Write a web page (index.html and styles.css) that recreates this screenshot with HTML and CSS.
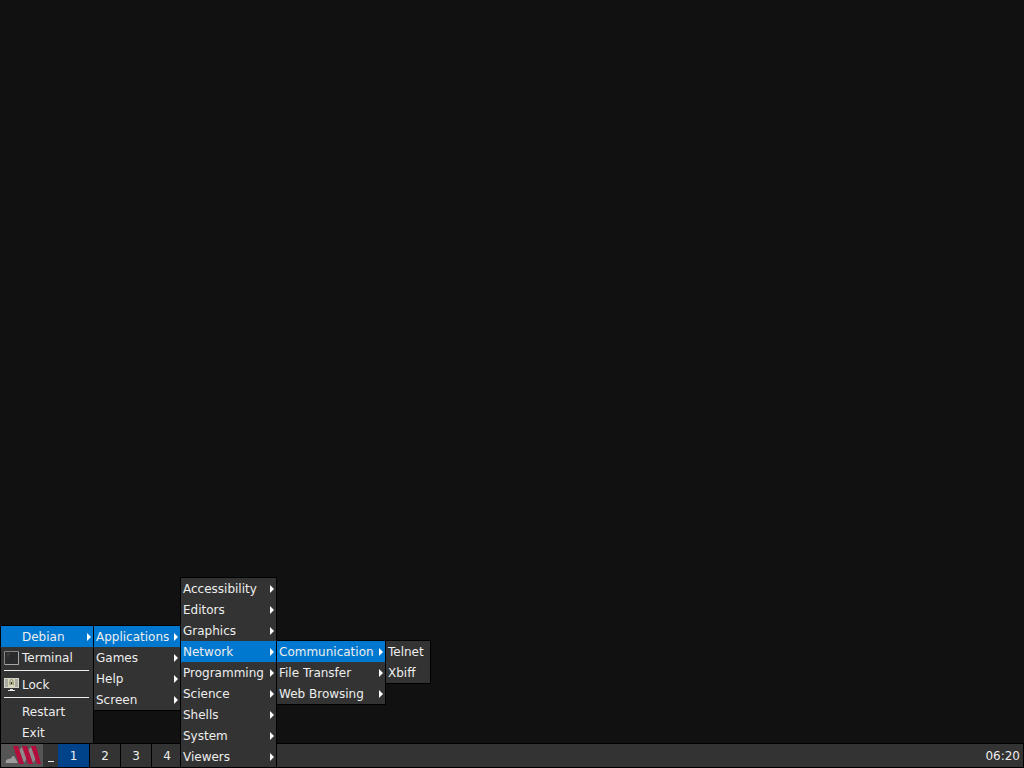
FILE: index.html
```
<!DOCTYPE html>
<html lang="en">
<head>
<meta charset="utf-8">
<title>Desktop</title>
<link rel="stylesheet" href="styles.css">
</head>
<body>
<main class="desktop"></main>
<footer class="taskbar">
  <button class="start" aria-label="Menu">
    <svg class="logo" viewBox="0 0 42 23" aria-hidden="true">
      <path d="M5 19c-1-3 1-4 3-4 3 0 2-3 5-3l4 7z" fill="#9d9a9a"/>
      <path d="M18 6l3-3 5 11-3 5zM27 6l3-3 5 11-3 5z" fill="#8f898c"/>
      <path d="M12 2h5l6 18h-5zM21 2h5l6 18h-5zM30 2h5l5 18h-4z" fill="#b40c3b"/>
    </svg>
  </button>
  <button class="show-desktop" aria-label="Show desktop"><span class="dash"></span></button>
  <nav class="workspaces" aria-label="Workspaces">
    <button class="workspace current">1</button>
    <button class="workspace">2</button>
    <button class="workspace">3</button>
    <button class="workspace">4</button>
  </nav>
  <time class="clock">06:20</time>

  <ul class="menu root">
    <li class="open"><button class="item parent">Debian</button>
      <ul class="menu sections">
        <li class="open"><button class="item parent">Applications</button>
          <ul class="menu categories">
            <li><button class="item parent">Accessibility</button></li>
            <li><button class="item parent">Editors</button></li>
            <li><button class="item parent">Graphics</button></li>
            <li class="open"><button class="item parent">Network</button>
              <ul class="menu network">
                <li class="open"><button class="item parent">Communication</button>
                  <ul class="menu programs">
                    <li><button class="item">Telnet</button></li>
                    <li><button class="item">Xbiff</button></li>
                  </ul>
                </li>
                <li><button class="item parent">File Transfer</button></li>
                <li><button class="item parent">Web Browsing</button></li>
              </ul>
            </li>
            <li><button class="item parent">Programming</button></li>
            <li><button class="item parent">Science</button></li>
            <li><button class="item parent">Shells</button></li>
            <li><button class="item parent">System</button></li>
            <li><button class="item parent">Viewers</button></li>
          </ul>
        </li>
        <li><button class="item parent">Games</button></li>
        <li><button class="item parent">Help</button></li>
        <li><button class="item parent">Screen</button></li>
      </ul>
    </li>
    <li><button class="item">
      <svg class="icon" viewBox="0 0 16 16" aria-hidden="true">
        <path d="M.5 1.500h14v13H.5z" fill="#292b2d" stroke="#858585"/>
        <path d="M3 4h3M3 6h2" stroke="#4b4d4f"/>
        <path d="M1 14.500h13.500V2" fill="none" stroke="#a5a5a5"/>
      </svg>Terminal</button></li>
    <li class="separator" role="separator"></li>
    <li><button class="item">
      <svg class="icon" viewBox="0 0 16 16" aria-hidden="true">
        <path d="M0 1h15v10H0z" fill="#d4d4ca"/>
        <path d="M1 2h13v8H1z" fill="#aaaaa0"/>
        <path d="M4 2h7v8H4z" fill="#d8d6bb"/>
        <path d="M6 5V4a1.500 1.500 0 0 1 3 0v1" fill="none" stroke="#8d8a6a"/>
        <path d="M5 5h5v3H5z" fill="#a5a27f"/>
        <path d="M7 5h1v2H7z" fill="#333"/>
        <path d="M6 12h3v1h2v1H4v-1h2z" fill="#e8e8e4"/>
      </svg>Lock</button></li>
    <li class="separator" role="separator"></li>
    <li><button class="item">Restart</button></li>
    <li><button class="item">Exit</button></li>
  </ul>
</footer>
</body>
</html>
```
FILE: styles.css
```
* { box-sizing: border-box; }

body {
  margin: 0;
  height: 100vh;
  display: flex;
  flex-direction: column;
  background: #111;
  color: #eee;
  font: 12px/21px "DejaVu Sans", sans-serif;
}

button {
  margin: 0;
  padding: 0;
  border: 0;
  background: none;
  color: inherit;
  font: inherit;
}

.desktop { flex: 1; }

.taskbar {
  position: relative;
  display: flex;
  height: 25px;
  border: 1px solid #000;
  background: #333;
}

.start {
  width: 42px;
  background: #555;
}

.logo {
  display: block;
  width: 42px;
  height: 23px;
}

.show-desktop {
  display: flex;
  align-items: flex-end;
  justify-content: center;
  width: 15px;
  padding-bottom: 5px;
}

.dash {
  width: 6px;
  height: 1px;
  background: #eee;
}

.workspaces { display: flex; }

.workspace {
  width: 31px;
  padding-top: 2px;
  border-right: 1px solid #000;
}

.workspace.current {
  width: 32px;
  background: #00438a;
}

.clock {
  margin-left: auto;
  padding-right: 3px;
  line-height: 25px;
}

.menu {
  position: absolute;
  margin: 0;
  padding: 0;
  border: 1px solid #000;
  background: #333;
  list-style: none;
}

.menu li { position: relative; }

.menu .menu {
  top: -1px;
  left: 100%;
}

.menu.root {
  bottom: 100%;
  left: -1px;
  width: 94px;
}

.menu .sections { width: 88px; }

.menu .categories {
  top: -49px;
  width: 97px;
}

.menu .network { width: 110px; }

.menu .programs { width: 46px; }

.item {
  display: flex;
  align-items: center;
  width: 100%;
  height: 21px;
  padding: 2px 2px 0;
  text-align: left;
  white-space: nowrap;
}

.root > li > .item { padding-left: 21px; }

.open > .item { background: #0078d0; }

.parent::after {
  content: "";
  margin: 0 0 2px auto;
  border: 4px solid transparent;
  border-left-color: #fff;
  border-right: 0;
}

.icon {
  width: 16px;
  height: 16px;
  margin: 0 2px 2px -18px;
}

.separator {
  height: 6px;
  padding: 2px 4px 0 3px;
}

.separator::before {
  content: "";
  display: block;
  height: 1px;
  background: #eee;
}
```
